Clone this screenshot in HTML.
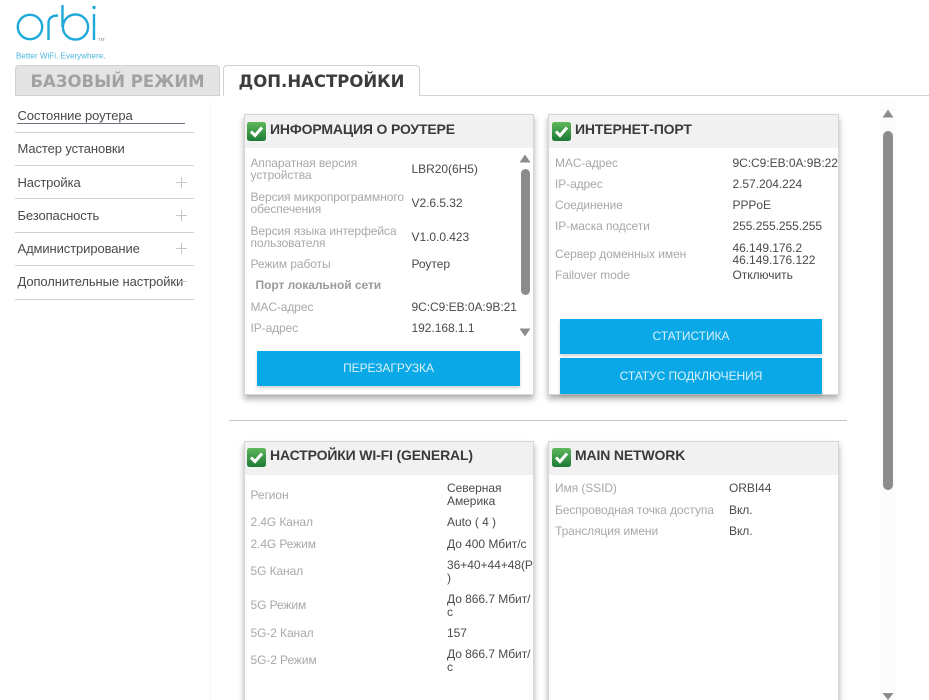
<!DOCTYPE html>
<html lang="ru"><head><meta charset="utf-8"><title>Orbi</title>
<style>
html,body{margin:0;padding:0;width:929px;height:700px;overflow:hidden;background:#fff}
#w{position:absolute;left:0;top:0;width:929px;height:700px;overflow:hidden;background:#fff;filter:blur(.3px);font-family:"Liberation Sans",Arial,sans-serif;color:#444}
.t{position:absolute;white-space:nowrap;font-size:12px;line-height:12px}
.l{color:#a8a8a8;letter-spacing:-.09px}.v{color:#4a4a4a;letter-spacing:-.04px}
.card{position:absolute;width:290px;background:#fff;border:1px solid #d6d6d6;box-sizing:border-box;box-shadow:0 4px 6px rgba(0,0,0,.32)}
.hd{position:absolute;left:0;right:0;top:0;height:33px;background:#f1f1f1}
.ttl{position:absolute;font-size:14px;line-height:16px;font-weight:bold;color:#3a3a3a;white-space:nowrap;letter-spacing:-.15px}
.chk{position:absolute;width:19px;height:19px}
.btn{position:absolute;background:#0aa8e6;color:#d8f2fb;font-size:12px;text-align:center;box-shadow:0 2px 3px rgba(0,0,0,.18);letter-spacing:-.05px}
.m{position:absolute;left:17.5px;font-size:13px;line-height:14px;color:#4a4a4a;white-space:nowrap;letter-spacing:-.1px}
.hr{position:absolute;left:15px;width:179px;height:1px;background:#d2d2d2}
.plus{position:absolute;left:176px;width:11px;height:11px}
.tab{position:absolute;box-sizing:border-box;font-family:"DejaVu Sans",Verdana,sans-serif;font-weight:bold;font-size:16.5px;text-align:center;border-radius:4px 4px 0 0;white-space:nowrap}
</style></head><body><div id="w">

<svg width="0" height="0" style="position:absolute"><defs><linearGradient id="g" x1="0" y1="0" x2="0" y2="1"><stop offset="0" stop-color="#5fb85a"/><stop offset="1" stop-color="#1c7a36"/></linearGradient></defs></svg>

<svg style="position:absolute;left:0;top:0" width="110" height="62" viewBox="0 0 110 62">
<g fill="none" stroke="#1fa9d8" stroke-width="2.4">
<circle cx="30" cy="27" r="12.2"/>
<path d="M48.5 40V23C48.5 18 52 15.5 58 15.5"/>
<path d="M62.5 5V27"/><circle cx="75.5" cy="27" r="12.6"/>
<path d="M94 14V40"/></g>
<circle cx="94" cy="7.5" r="1.7" fill="#1fa9d8"/>
<text x="98" y="41" font-family="Liberation Sans" font-size="4.5" fill="#8a8a8a">TM</text>
<text x="16" y="58.5" font-family="Liberation Sans" font-size="8.1" fill="#4db8df">Better WiFi. Everywhere.</text>
</svg>

<div style="position:absolute;left:420px;top:95px;width:509px;height:1px;background:#d4d4d4"></div>
<div class="tab" style="left:15px;top:65px;width:205px;height:31px;background:#e4e4e4;border:1px solid #d2d2d2;color:#a2a2a2;line-height:31px">БАЗОВЫЙ РЕЖИМ</div>
<div class="tab" style="left:223px;top:65px;width:197px;height:31px;background:#fff;border:1px solid #d2d2d2;border-bottom:0;color:#3c3c3c;line-height:31px">ДОП.НАСТРОЙКИ</div>

<div class="m" style="top:109px">Состояние роутера</div>
<div style="position:absolute;left:17px;top:123px;width:168px;height:1px;background:#7b6b80"></div>
<div class="hr" style="top:132px"></div>
<div class="m" style="top:142px">Мастер установки</div>
<div class="hr" style="top:165px"></div>
<div class="m" style="top:176px">Настройка</div>
<div class="hr" style="top:198px"></div>
<div class="m" style="top:209px">Безопасность</div>
<div class="hr" style="top:232px"></div>
<div class="m" style="top:242px">Администрирование</div>
<div class="hr" style="top:265px"></div>
<div class="m" style="top:275px">Дополнительные настройки</div>
<div class="hr" style="top:299px"></div>
<svg class="plus" style="top:177px" viewBox="0 0 11 11"><path d="M0 5.5H11M5.5 0V11" stroke="#c8c8c8"/></svg>
<svg class="plus" style="top:210px" viewBox="0 0 11 11"><path d="M0 5.5H11M5.5 0V11" stroke="#c8c8c8"/></svg>
<svg class="plus" style="top:243px" viewBox="0 0 11 11"><path d="M0 5.5H11M5.5 0V11" stroke="#c8c8c8"/></svg>
<svg class="plus" style="top:276px" viewBox="0 0 11 11"><path d="M3 5.5H11" stroke="#c8c8c8"/></svg>

<div style="position:absolute;left:210px;top:100px;width:1px;height:600px;background:#f7f7f7"></div>

<!-- Card 1 -->
<div class="card" style="left:244px;top:114px;height:281px"><div class="hd"></div></div>
<svg class="chk" style="left:247px;top:122px" viewBox="0 0 19 19"><rect width="19" height="19" rx="2.5" fill="url(#g)"/><path d="M4 9.5L8 13.5L15 5.5" fill="none" stroke="#fff" stroke-width="3"/></svg>
<div class="ttl" style="left:270px;top:121px">ИНФОРМАЦИЯ О РОУТЕРЕ</div>
<div class="t l" style="left:250.5px;top:157px">Аппаратная версия</div>
<div class="t l" style="left:250.5px;top:169px">устройства</div>
<div class="t v" style="left:411.5px;top:163px">LBR20(6H5)</div>
<div class="t l" style="left:250.5px;top:191px">Версия микропрограммного</div>
<div class="t l" style="left:250.5px;top:203px">обеспечения</div>
<div class="t v" style="left:411.5px;top:197px">V2.6.5.32</div>
<div class="t l" style="left:250.5px;top:225px">Версия языка интерфейса</div>
<div class="t l" style="left:250.5px;top:237px">пользователя</div>
<div class="t v" style="left:411.5px;top:231px">V1.0.0.423</div>
<div class="t l" style="left:250.5px;top:258px">Режим работы</div>
<div class="t v" style="left:411.5px;top:258px">Роутер</div>
<div class="t" style="left:255.5px;top:279px;font-weight:bold;color:#9a9a9a;letter-spacing:-.05px">Порт локальной сети</div>
<div class="t l" style="left:250.5px;top:301px">MAC-адрес</div>
<div class="t v" style="left:411.5px;top:301px">9C:C9:EB:0A:9B:21</div>
<div class="t l" style="left:250.5px;top:322px">IP-адрес</div>
<div class="t v" style="left:411.5px;top:322px">192.168.1.1</div>
<svg style="position:absolute;left:519px;top:154px" width="12" height="9"><path d="M0.5 8.5L6 0.5L11.5 8.5Z" fill="#8c8c8c"/></svg>
<svg style="position:absolute;left:519px;top:328px" width="12" height="9"><path d="M0.5 0.5L6 8.5L11.5 0.5Z" fill="#8c8c8c"/></svg>
<div style="position:absolute;left:521px;top:169px;width:9px;height:126px;border-radius:5px;background:#8c8c8c"></div>
<div class="btn" style="left:257px;top:351px;width:263px;height:35px;line-height:34px">ПЕРЕЗАГРУЗКА</div>

<!-- Card 2 -->
<div class="card" style="left:548px;top:114px;height:281px;width:291px"><div class="hd"></div></div>
<svg class="chk" style="left:552px;top:122px" viewBox="0 0 19 19"><rect width="19" height="19" rx="2.5" fill="url(#g)"/><path d="M4 9.5L8 13.5L15 5.5" fill="none" stroke="#fff" stroke-width="3"/></svg>
<div class="ttl" style="left:575px;top:121px">ИНТЕРНЕТ-ПОРТ</div>
<div class="t l" style="left:555px;top:157px">MAC-адрес</div>
<div class="t v" style="left:732.5px;top:157px">9C:C9:EB:0A:9B:22</div>
<div class="t l" style="left:555px;top:178px">IP-адрес</div>
<div class="t v" style="left:732.5px;top:178px">2.57.204.224</div>
<div class="t l" style="left:555px;top:199px">Соединение</div>
<div class="t v" style="left:732.5px;top:199px">PPPoE</div>
<div class="t l" style="left:555px;top:220px">IP-маска подсети</div>
<div class="t v" style="left:732.5px;top:220px">255.255.255.255</div>
<div class="t l" style="left:555px;top:248px">Сервер доменных имен</div>
<div class="t v" style="left:732.5px;top:242px">46.149.176.2</div>
<div class="t v" style="left:732.5px;top:254px">46.149.176.122</div>
<div class="t l" style="left:555px;top:269px">Failover mode</div>
<div class="t v" style="left:732.5px;top:269px">Отключить</div>
<div class="btn" style="left:560px;top:319px;width:262px;height:35px;line-height:34px">СТАТИСТИКА</div>
<div class="btn" style="left:560px;top:358px;width:262px;height:36px;line-height:36px">СТАТУС ПОДКЛЮЧЕНИЯ</div>

<div style="position:absolute;left:229px;top:420px;width:618px;height:1px;background:#c4c4c4"></div>

<!-- Card 3 -->
<div class="card" style="left:244px;top:441px;height:280px"><div class="hd"></div></div>
<svg class="chk" style="left:247px;top:448px" viewBox="0 0 19 19"><rect width="19" height="19" rx="2.5" fill="url(#g)"/><path d="M4 9.5L8 13.5L15 5.5" fill="none" stroke="#fff" stroke-width="3"/></svg>
<div class="ttl" style="left:270px;top:447px">НАСТРОЙКИ WI-FI (GENERAL)</div>
<div class="t l" style="left:250.5px;top:489px">Регион</div>
<div class="t v" style="left:447px;top:482px">Северная</div>
<div class="t v" style="left:447px;top:495px">Америка</div>
<div class="t l" style="left:250.5px;top:516px">2.4G Канал</div>
<div class="t v" style="left:447px;top:516px">Auto ( 4 )</div>
<div class="t l" style="left:250.5px;top:538px">2.4G Режим</div>
<div class="t v" style="left:447px;top:538px">До 400 Мбит/с</div>
<div class="t l" style="left:250.5px;top:565px">5G Канал</div>
<div class="t v" style="left:447px;top:559px">36+40+44+48(P</div>
<div class="t v" style="left:447px;top:572px">)</div>
<div class="t l" style="left:250.5px;top:599px">5G Режим</div>
<div class="t v" style="left:447px;top:593px">До 866.7 Мбит/</div>
<div class="t v" style="left:447px;top:606px">с</div>
<div class="t l" style="left:250.5px;top:627px">5G-2 Канал</div>
<div class="t v" style="left:447px;top:627px">157</div>
<div class="t l" style="left:250.5px;top:654px">5G-2 Режим</div>
<div class="t v" style="left:447px;top:648px">До 866.7 Мбит/</div>
<div class="t v" style="left:447px;top:661px">с</div>

<!-- Card 4 -->
<div class="card" style="left:548px;top:441px;height:280px;width:291px"><div class="hd"></div></div>
<svg class="chk" style="left:552px;top:448px" viewBox="0 0 19 19"><rect width="19" height="19" rx="2.5" fill="url(#g)"/><path d="M4 9.5L8 13.5L15 5.5" fill="none" stroke="#fff" stroke-width="3"/></svg>
<div class="ttl" style="left:575px;top:447px">MAIN NETWORK</div>
<div class="t l" style="left:555px;top:482px">Имя (SSID)</div>
<div class="t v" style="left:729px;top:482px">ORBI44</div>
<div class="t l" style="left:555px;top:504px">Беспроводная точка доступа</div>
<div class="t v" style="left:729px;top:504px">Вкл.</div>
<div class="t l" style="left:555px;top:525px">Трансляция имени</div>
<div class="t v" style="left:729px;top:525px">Вкл.</div>

<!-- Page scrollbar -->
<div style="position:absolute;left:880px;top:100px;width:17px;height:600px;background:#fcfcfc"></div>
<svg style="position:absolute;left:882px;top:109px" width="12" height="9"><path d="M0.5 8.5L6 0.5L11.5 8.5Z" fill="#8c8c8c"/></svg>
<svg style="position:absolute;left:882px;top:693px" width="12" height="7"><path d="M0.5 0L6 7L11.5 0Z" fill="#8c8c8c"/></svg>
<div style="position:absolute;left:883px;top:131px;width:10px;height:359px;border-radius:5px;background:#8c8c8c"></div>
</div></body></html>
